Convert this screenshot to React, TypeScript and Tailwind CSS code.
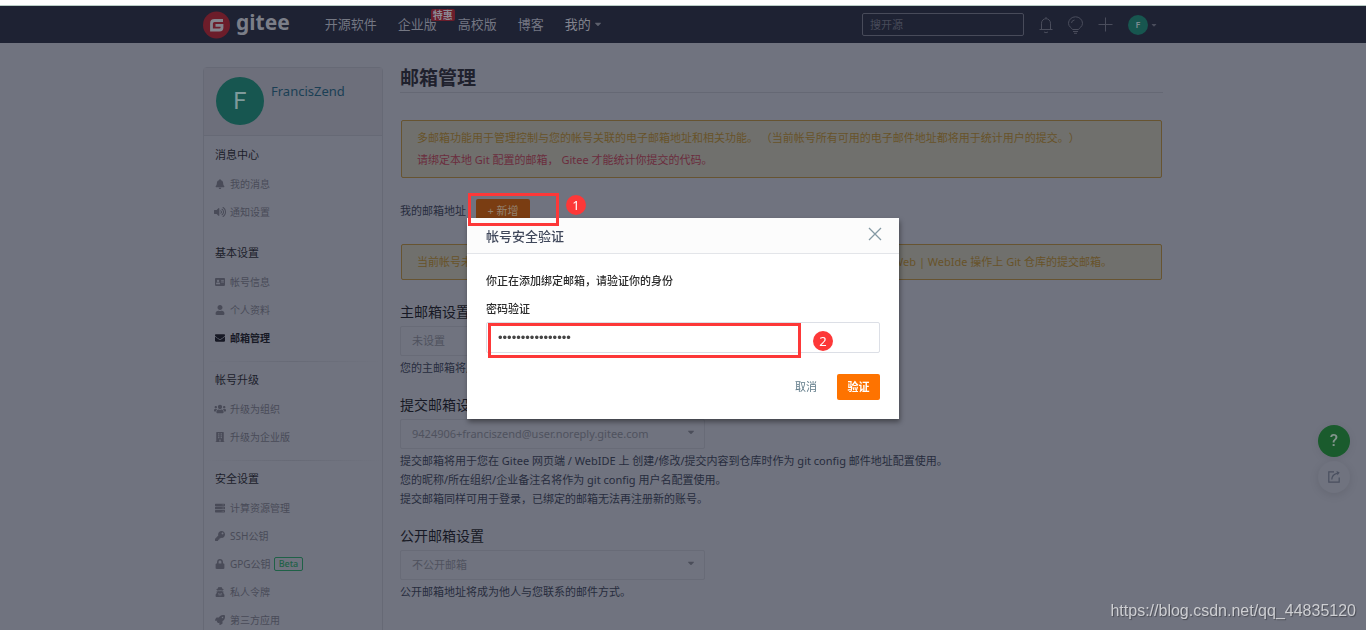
import type { ReactNode } from 'react'
import {
  FaAddressCard,
  FaBell,
  FaBuilding,
  FaCaretDown,
  FaEnvelope,
  FaKey,
  FaLock,
  FaRocket,
  FaServer,
  FaUser,
  FaUsers,
  FaUserSecret,
  FaVolumeUp,
} from 'react-icons/fa'

type MenuItem = { label: string; icon: ReactNode; active?: boolean; tag?: string }
type MenuGroup = { title: string; divided?: boolean; items: MenuItem[] }

const menu: MenuGroup[] = [
  {
    title: '消息中心',
    items: [
      { label: '我的消息', icon: <FaBell size={10} /> },
      { label: '通知设置', icon: <FaVolumeUp size={12} /> },
    ],
  },
  {
    title: '基本设置',
    items: [
      { label: '帐号信息', icon: <FaAddressCard size={10} /> },
      { label: '个人资料', icon: <FaUser size={10} /> },
      { label: '邮箱管理', icon: <FaEnvelope size={10} />, active: true },
    ],
  },
  {
    title: '帐号升级',
    divided: true,
    items: [
      { label: '升级为组织', icon: <FaUsers size={12} /> },
      { label: '升级为企业版', icon: <FaBuilding size={10} /> },
    ],
  },
  {
    title: '安全设置',
    divided: true,
    items: [
      { label: '计算资源管理', icon: <FaServer size={10} /> },
      { label: 'SSH公钥', icon: <FaKey size={10} /> },
      { label: 'GPG公钥', icon: <FaLock size={10} />, tag: 'Beta' },
      { label: '私人令牌', icon: <FaUserSecret size={10} /> },
      { label: '第三方应用', icon: <FaRocket size={10} /> },
    ],
  },
]

const Logo = () => (
  <a href="#" className="flex items-center gap-[6px]">
    <svg width="27" height="28" viewBox="0 0 27 28">
      <circle cx="13.5" cy="14" r="13.5" fill="#6c1d2a" />
      <path
        d="M20 9.500H11.500Q8.500 9.500 8.500 12.500V19H16.500Q19 19 19 16.500V14.300H12.500"
        fill="none"
        stroke="#83858d"
        strokeWidth="2.800"
      />
    </svg>
    <span className="mb-[6px] text-[21px] leading-[28px] font-bold text-[#7b7e88]">gitee</span>
  </a>
)

const Header = () => (
  <header className="border-t border-[#b9cdc6] bg-[#1e2233] text-[#747783]">
    <div className="mx-auto flex h-[37px] w-[960px] items-center pr-[5px]">
      <Logo />
      <nav className="mb-[2px] ml-[35px] flex items-center gap-[21px] text-[13px] leading-5">
        <a href="#">开源软件</a>
        <a href="#" className="relative">
          企业版
          <span className="absolute -top-[5px] left-[33px] rounded-xs bg-[#6b1d2b] px-[2px] text-[10px] leading-[12px] font-bold whitespace-nowrap text-[#8d8a94]">
            特惠
          </span>
        </a>
        <a href="#">高校版</a>
        <a href="#">博客</a>
        <a href="#" className="flex items-center gap-[2px] text-[#83858f]">
          我的
          <FaCaretDown size={10} className="text-[#5d606c]" />
        </a>
      </nav>
      <input
        type="search"
        aria-label="搜开源"
        placeholder="搜开源"
        className="ml-auto h-[23px] w-[162px] rounded-xs border border-[#484b5a] px-[7px] text-[11px] placeholder:text-[#484b5a]"
      />
      <div className="flex items-center text-[#4a4d5c]">
        <button aria-label="通知" className="ml-[14px]">
          <svg width="16" height="18" viewBox="0 0 16 18" fill="none" stroke="currentColor">
            <path d="M3.500 13.500V7.200a4.500 4.500 0 0 1 9 0V13.500M1.500 13.500h13M8 1v1.500M6 16q2 1.500 4 0" />
          </svg>
        </button>
        <button aria-label="动态" className="ml-[13px]">
          <svg width="17" height="18" viewBox="0 0 17 18" fill="none" stroke="currentColor">
            <path d="M5.500 13.500C5 12 1.500 10.800 1.500 7.300a7 6.500 0 0 1 14 0c0 3.500-3.500 4.700-4 6.200zM6 15.500h5M7 17.300h3M4.500 7q.3-2.700 3-3" />
          </svg>
        </button>
        <button aria-label="新建" className="ml-[14px]">
          <svg width="15" height="15" viewBox="0 0 15 15" stroke="currentColor">
            <path d="M7.500 0.500v14M0.500 7.500h14" />
          </svg>
        </button>
        <button aria-label="帐号" className="ml-[15px] flex items-center gap-[2px]">
          <span className="size-5 rounded-full bg-[#17564f] text-center text-[9px] leading-5 font-semibold text-[#7b8a90]">
            F
          </span>
          <FaCaretDown size={8} />
        </button>
      </div>
    </div>
  </header>
)

const Sidebar = () => (
  <aside className="w-[180px] shrink-0 rounded-sm border border-[#666975]">
    <div className="flex h-[68px] gap-[7px] border-b border-[#666975] bg-[#6d6f7b] px-3 pt-[9px]">
      <span className="size-12 rounded-full bg-[#175650] text-center font-[Roboto] text-[24px] leading-[48px] text-[#7f9a9b]">
        F
      </span>
      <a href="#" className="mt-[5px] text-[13px] leading-[18px] text-[#1b3f55]">
        FrancisZend
      </a>
    </div>
    <div className="pt-1">
      {menu.map((group, index) => (
        <div key={group.title} className={index > 0 && !group.divided ? 'mt-3' : ''}>
          {group.divided && (
            <div className="mt-[9px] mb-[3px] h-px bg-linear-to-r from-[#70737f] via-[#676a76] to-[#70737f]" />
          )}
          <h3 className="pl-[11px] text-[11px] leading-[30px] text-[#1c1e2b]">{group.title}</h3>
          <ul>
            {group.items.map((item) => (
              <li key={item.label}>
                <a
                  href="#"
                  className={
                    item.active
                      ? 'flex h-7 items-center pl-2 text-[10px] font-semibold text-[#171925]'
                      : 'flex h-7 items-center pl-2 text-[10px] text-[#494b58]'
                  }
                >
                  <span className="mr-[2px] flex w-4 justify-center">{item.icon}</span>
                  {item.label}
                  {item.tag && (
                    <span className="ml-[3px] rounded-xs border border-[#1f6147] px-1 text-[9px] leading-[12px] font-medium text-[#1f6147]">
                      {item.tag}
                    </span>
                  )}
                </a>
              </li>
            ))}
          </ul>
        </div>
      ))}
    </div>
  </aside>
)

const Notice = ({ children, className = '' }: { children: ReactNode; className?: string }) => (
  <div
    className={`mx-px rounded-xs border border-[#675431] bg-[#70706d] px-[15px] py-[6px] leading-[22px] text-[#685329] ${className}`}
  >
    {children}
  </div>
)

const EmailSetting = ({ id, title, value, children }: { id: string; title: string; value: string; children: ReactNode }) => (
  <section className="mb-[14px]">
    <label htmlFor={id} className="block text-[14px] leading-7 text-[#171925]">
      {title}
    </label>
    <div className="relative w-[305px]">
      <select
        id={id}
        disabled
        className="block h-[30px] w-full appearance-none rounded-xs border border-[#686b77] px-[11px] text-[11px] text-[#4f525e] opacity-100"
      >
        <option>{value}</option>
      </select>
      <FaCaretDown size={10} className="absolute top-2 right-[9px] text-[#4b4e5a]" />
    </div>
    <div className="mt-[2px] leading-[19px] text-[#272c3d]">{children}</div>
  </section>
)

const VerifyDialog = () => (
  <div className="fixed inset-x-0 top-[7px] bottom-0 z-10 flex items-center justify-center">
    <form role="dialog" aria-labelledby="verify-title" className="relative w-[432px] bg-white shadow-[1px_3px_5px_rgba(0,0,0,0.4)]">
      <div className="flex h-9 items-center justify-between border-b border-[#e3e5e9] bg-[#fcfcfc] px-[17px] pl-[19px]">
        <h2 id="verify-title" className="text-[13px] leading-5 font-medium text-[#40485b]">
          帐号安全验证
        </h2>
        <button type="button" aria-label="关闭" className="mb-1 text-[#8499a4]">
          <svg width="14" height="14" viewBox="0 0 14 14" stroke="currentColor" strokeWidth="1.300">
            <path d="M1 1l12 12M13 1L1 13" />
          </svg>
        </button>
      </div>
      <div className="px-[19px] pt-[17px] pb-[19px] text-[#2b2b2b]">
        <p className="leading-5 font-medium">你正在添加绑定邮箱，请验证你的身份</p>
        <label htmlFor="password" className="mt-2 block leading-5 font-medium">
          密码验证
        </label>
        <input
          id="password"
          type="password"
          defaultValue="franciszend12345"
          className="mt-[3px] block h-[31px] w-full rounded-xs border border-[#dcdfe6] px-[11px] font-['Liberation_Sans'] text-[13px] text-[#444]"
        />
        <div className="mt-[21px] flex justify-end gap-[9px]">
          <button type="button" className="h-[26px] px-[11px] text-[#5f7a88]">
            取消
          </button>
          <button type="button" className="h-[26px] w-[43px] rounded-xs bg-[#fe7300] font-bold text-white">
            验证
          </button>
        </div>
      </div>

      {/* step markers */}
      <div className="pointer-events-none absolute -top-[25px] left-px h-[33px] w-[91px] border-3 border-[#fd3838]" />
      <span className="absolute -top-[23px] left-[99px] size-5 rounded-full bg-[#fd3838] text-center text-[13px] leading-5 text-white">
        1
      </span>
      <div className="pointer-events-none absolute top-[105px] left-[21px] h-[35px] w-[313px] border-3 border-[#fd3838]" />
      <span className="absolute top-[113px] left-[346px] size-5 rounded-full bg-[#fd3838] text-center text-[13px] leading-5 text-white">
        2
      </span>
    </form>
  </div>
)

const FloatingTools = () => (
  <div className="fixed right-4 bottom-[137px] flex flex-col gap-1">
    <button
      aria-label="帮助"
      className="size-8 rounded-full bg-[#1a5b2d] font-[Roboto] text-[17px] font-medium text-[#83958d] shadow-[0_2px_10px_rgba(0,0,0,0.07)]"
    >
      ?
    </button>
    <button
      aria-label="分享"
      className="flex size-8 items-center justify-center rounded-full bg-[#70737f] text-[#494f5f] shadow-[0_2px_10px_rgba(0,0,0,0.1)]"
    >
      <svg width="12" height="12" viewBox="0 0 12 12" fill="none" stroke="currentColor" strokeWidth="1.200">
        <path d="M6 .8H.8V11.200H11.200V6.500M3.800 8.500Q4 3.500 9 2.300" />
        <path d="M8.500 0L11.700 1.500L9.500 4.300Z" fill="currentColor" stroke="none" />
      </svg>
    </button>
  </div>
)

export default function App() {
  return (
    <div className="h-screen overflow-hidden bg-[#70737f] font-['Noto_Sans','Noto_Sans_CJK_SC',sans-serif] text-[11px] [text-spacing-trim:space-all]">
      <div className="h-[5px] bg-white" />
      <Header />
      <div className="mx-auto flex w-[960px] gap-[17px] pt-6">
        <Sidebar />
        <main className="min-w-0 grow">
          <h1 className="border-b border-[#656874] pb-[3px] text-[19px] leading-[22px] font-bold text-[#1f212d]">邮箱管理</h1>
          <Notice className="mt-[27px]">
            <p>多邮箱功能用于管理控制与您的帐号关联的电子邮箱地址和相关功能。 （当前帐号所有可用的电子邮件地址都将用于统计用户的提交。）</p>
            <p className="text-[#6b2d3d]">请绑定本地 Git 配置的邮箱， Gitee 才能统计你提交的代码。</p>
          </Notice>
          <div className="mt-[21px] flex h-6 items-center gap-[10px] text-[#272c3d]">
            我的邮箱地址
            <button className="h-6 w-[54px] rounded-xs bg-[#7a3d12] text-[#93826f]">+ 新增</button>
          </div>
          <Notice className="mt-[21px] mb-[18px]">
            当前帐号未设置提交邮箱，将默认使用 9424906+franciszend@user.noreply.gitee.com 作为您在 Web | WebIde 操作上 Git 仓库的提交邮箱。
          </Notice>
          <EmailSetting id="primary" title="主邮箱设置" value="未设置">
            <p>您的主邮箱将用于接收通知。</p>
          </EmailSetting>
          <EmailSetting id="commit" title="提交邮箱设置" value="9424906+franciszend@user.noreply.gitee.com">
            <p>提交邮箱将用于您在 Gitee 网页端 / WebIDE 上 创建/修改/提交内容到仓库时作为 git config 邮件地址配置使用。</p>
            <p>您的昵称/所在组织/企业备注名将作为 git config 用户名配置使用。</p>
            <p>提交邮箱同样可用于登录，已绑定的邮箱无法再注册新的账号。</p>
          </EmailSetting>
          <EmailSetting id="public" title="公开邮箱设置" value="不公开邮箱">
            <p>公开邮箱地址将成为他人与您联系的邮件方式。</p>
          </EmailSetting>
        </main>
      </div>
      <FloatingTools />
      <VerifyDialog />
      <span className="fixed right-[10px] bottom-[9px] font-['Liberation_Sans'] text-[16px] leading-5 text-[#cdced2] [text-shadow:1px_1px_1px_rgba(0,0,0,0.35)]">
        https://blog.csdn.net/qq_44835120
      </span>
    </div>
  )
}
